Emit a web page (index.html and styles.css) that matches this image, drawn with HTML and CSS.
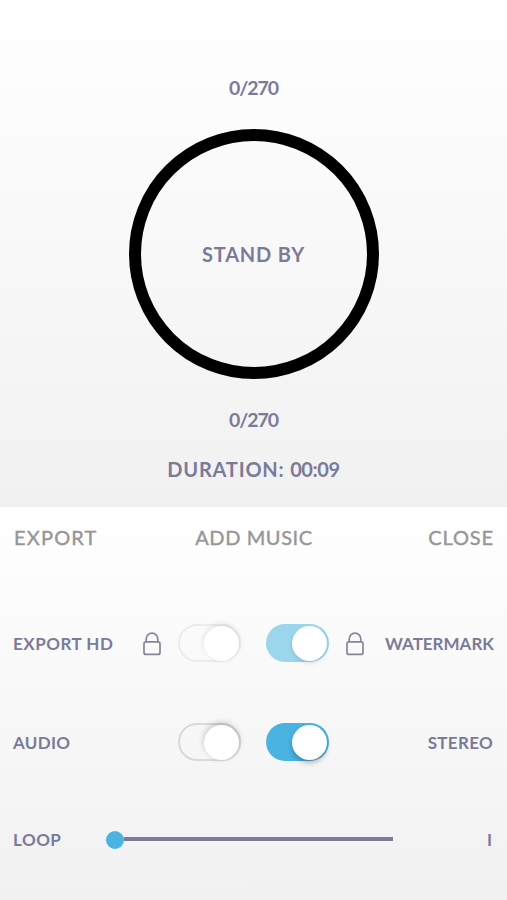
FILE: index.html
```html
<!DOCTYPE html>
<html lang="en">
<head>
    <meta charset="UTF-8">
    <meta name="viewport" content="width=device-width, initial-scale=1.0">
    <title>Export</title>
    <link rel="stylesheet" href="styles.css">
</head>
<body>
    <div class="status">
        <div class="counter">0/270</div>
        <div class="ring"><span class="standby">STAND BY</span></div>
        <div class="counter">0/270</div>
        <div class="duration">DURATION: <span class="time">00:09</span></div>
    </div>

    <div class="panel">
        <div class="actions">
            <span class="export">EXPORT</span>
            <span class="music">ADD MUSIC</span>
            <span class="close">CLOSE</span>
        </div>

        <div class="row">
            <span class="label export-hd">EXPORT HD</span>
            <svg class="lock" viewBox="0 0 18 24">
                <rect x="1" y="9.8" width="16" height="12.6" rx="2"/>
                <path d="M3.2 9.8V7a5.8 5.8 0 0 1 11.6 0v2.8"/>
            </svg>
            <div class="toggle off locked"><div class="knob"></div></div>
            <div class="toggle on locked"><div class="knob"></div></div>
            <svg class="lock" viewBox="0 0 18 24">
                <rect x="1" y="9.8" width="16" height="12.6" rx="2"/>
                <path d="M3.2 9.8V7a5.8 5.8 0 0 1 11.6 0v2.8"/>
            </svg>
            <span class="label right watermark">WATERMARK</span>
        </div>

        <div class="row">
            <span class="label audio">AUDIO</span>
            <span></span>
            <div class="toggle off"><div class="knob"></div></div>
            <div class="toggle on"><div class="knob"></div></div>
            <span></span>
            <span class="label right stereo">STEREO</span>
        </div>

        <div class="loop">
            <span class="label loop-label">LOOP</span>
            <div class="slider">
                <div class="thumb"></div>
                <div class="track"></div>
            </div>
            <span class="label right loop-count">I</span>
        </div>
    </div>
</body>
</html>
```
FILE: styles.css
```css
* {
    box-sizing: border-box;
}
body {
    margin: 0;
    height: 900px;
    overflow: hidden;
    font-family: 'Lato', sans-serif;
    font-size: 20px;
    font-weight: 700;
    line-height: 24px;
    color: #7b7b99;
    white-space: nowrap;
}
.status {
    height: 507px;
    padding-top: 76px;
    display: flex;
    flex-direction: column;
    align-items: center;
    background: linear-gradient(#fff, #f1f1f1);
}
.counter {
    font-size: 19.5px;
    letter-spacing: -1.1px;
}
.ring {
    width: 250px;
    height: 250px;
    margin: 29px 0;
    border: 12px solid #000;
    border-radius: 50%;
    display: flex;
    align-items: center;
    justify-content: center;
}
.standby {
    letter-spacing: 0.8px;
}
.duration {
    margin-top: 25px;
    letter-spacing: 0.8px;
}
.time {
    letter-spacing: -0.4px;
}
.panel {
    height: 393px;
    padding: 18px 13px 0 13px;
    background: linear-gradient(#fff, #f1f1f1);
}
.actions {
    display: grid;
    grid-template-columns: 1fr auto 1fr;
    padding: 0 0 0 1px;
    font-weight: 400;
    letter-spacing: 0.9px;
    color: #969696;
    -webkit-text-stroke: 0.4px #969696;
}
.export {
    letter-spacing: 1.2px;
}
.music {
    letter-spacing: 0.6px;
}
.close {
    text-align: right;
}
.row {
    display: grid;
    grid-template-columns: 130px 35px 88px 80px 35px 1fr;
    align-items: center;
    height: 38px;
    margin-top: 75px;
}
.row + .row {
    margin-top: 61px;
}
.label {
    padding-top: 1px;
    font-size: 17px;
}
.right {
    text-align: right;
}
.export-hd {
    letter-spacing: 0.5px;
}
.audio {
    letter-spacing: 0.3px;
}
.stereo {
    padding-right: 1px;
    letter-spacing: 0.3px;
}
.lock {
    width: 18px;
    height: 24px;
    margin-top: 1px;
    fill: none;
    stroke: #858599;
    stroke-width: 1.7;
}
.toggle {
    width: 63px;
    height: 38px;
    border-radius: 19px;
    display: flex;
    align-items: center;
    justify-content: flex-end;
}
.knob {
    width: 35px;
    height: 35px;
    border-radius: 50%;
    background: #fff;
}
.off {
    border: 2px solid #d9d9d9;
}
.off .knob {
    box-shadow: 0 -2px 6px rgba(0, 0, 0, 0.22);
}
.off.locked {
    border-color: #ececec;
}
.off.locked .knob {
    box-shadow: 0 -2px 6px rgba(0, 0, 0, 0.11);
}
.on {
    padding-right: 2px;
    background: #4ab3e2;
}
.on .knob {
    box-shadow: 0 3px 5px rgba(0, 0, 0, 0.25);
}
.on.locked {
    background: #9bd6ec;
}
.on.locked .knob {
    box-shadow: 0 2px 4px rgba(0, 0, 0, 0.12);
}
.loop {
    display: grid;
    grid-template-columns: 93px 287px 1fr;
    align-items: center;
    height: 24px;
    margin-top: 66px;
}
.loop-label {
    letter-spacing: 0.5px;
}
.loop-count {
    padding-right: 2px;
}
.slider {
    display: flex;
    align-items: center;
}
.thumb {
    width: 18px;
    height: 18px;
    border-radius: 50%;
    background: #4ab3e2;
}
.track {
    flex: 1;
    height: 4px;
    margin-bottom: 1px;
    background: #7b7b99;
}
```
